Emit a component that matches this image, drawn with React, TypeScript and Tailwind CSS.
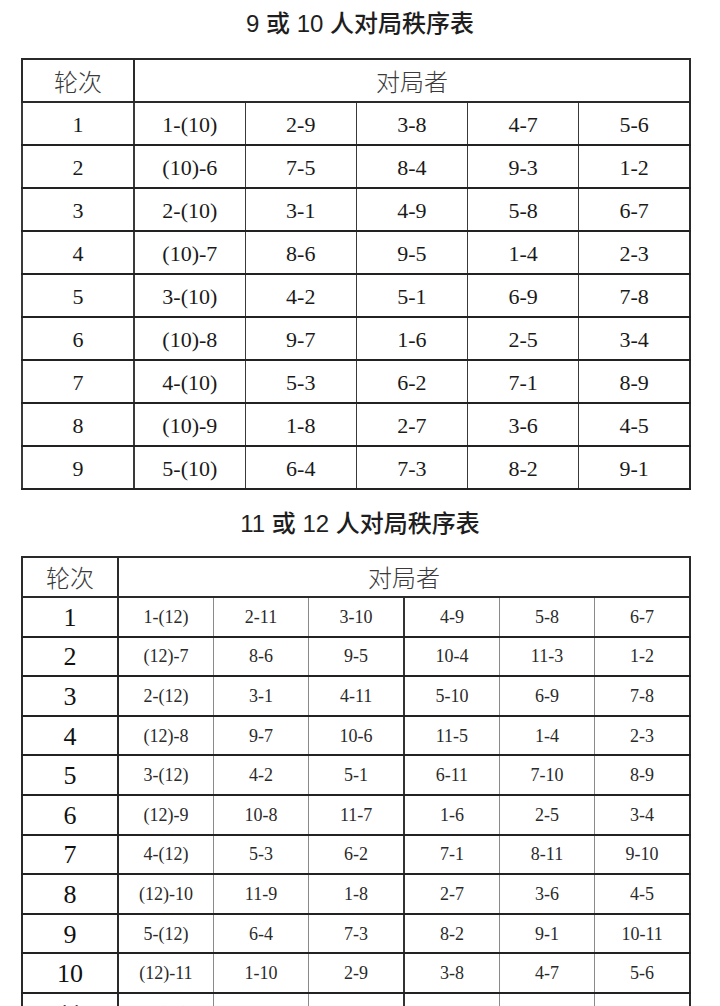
const table10: string[][] = [
  ["1-(10)", "2-9", "3-8", "4-7", "5-6"],
  ["(10)-6", "7-5", "8-4", "9-3", "1-2"],
  ["2-(10)", "3-1", "4-9", "5-8", "6-7"],
  ["(10)-7", "8-6", "9-5", "1-4", "2-3"],
  ["3-(10)", "4-2", "5-1", "6-9", "7-8"],
  ["(10)-8", "9-7", "1-6", "2-5", "3-4"],
  ["4-(10)", "5-3", "6-2", "7-1", "8-9"],
  ["(10)-9", "1-8", "2-7", "3-6", "4-5"],
  ["5-(10)", "6-4", "7-3", "8-2", "9-1"],
];

const table12: string[][] = [
  ["1-(12)", "2-11", "3-10", "4-9", "5-8", "6-7"],
  ["(12)-7", "8-6", "9-5", "10-4", "11-3", "1-2"],
  ["2-(12)", "3-1", "4-11", "5-10", "6-9", "7-8"],
  ["(12)-8", "9-7", "10-6", "11-5", "1-4", "2-3"],
  ["3-(12)", "4-2", "5-1", "6-11", "7-10", "8-9"],
  ["(12)-9", "10-8", "11-7", "1-6", "2-5", "3-4"],
  ["4-(12)", "5-3", "6-2", "7-1", "8-11", "9-10"],
  ["(12)-10", "11-9", "1-8", "2-7", "3-6", "4-5"],
  ["5-(12)", "6-4", "7-3", "8-2", "9-1", "10-11"],
  ["(12)-11", "1-10", "2-9", "3-8", "4-7", "5-6"],
  ["6-(12)", "7-5", "8-4", "9-3", "10-2", "11-1"],
];

const serif = "font-['Liberation_Serif','Noto_Sans_CJK_SC',serif]";
const cjk = "font-['Noto_Sans_CJK_SC','Liberation_Sans',sans-serif]";
const title = "font-['Liberation_Sans','Noto_Sans_CJK_SC',sans-serif]";

export default function App() {
  return (
    <div className="w-[720px] bg-white px-[21px] text-[#1a1a1a]">
      {/* 9 or 10 players */}
      <h1 className={`${title} h-[58px] pt-[12px] text-center text-[24px] leading-[24px] font-medium text-[#1e1e1e]`}>
        9 或 10 人对局秩序表
      </h1>
      <table className="w-[670px] table-fixed border-collapse">
        <thead>
          <tr className="h-[43px]">
            <th className={`${cjk} w-[112px] border-2 border-[#2a2a2a] text-[24px] leading-none font-light text-[#3a3a3a]`}>轮次</th>
            <th colSpan={5} className={`${cjk} border-2 border-[#2a2a2a] text-[24px] leading-none font-light text-[#3a3a3a]`}>
              对局者
            </th>
          </tr>
        </thead>
        <tbody>
          {table10.map((row, i) => (
            <tr key={i} className="h-[43px]">
              <td className={`${serif} border-x-2 border-y-2 border-x-[#3a3a3a] border-y-[#222] pt-[3px] text-center text-[22px] leading-none`}>
                {i + 1}
              </td>
              {row.map((c, j) => (
                <td
                  key={j}
                  className={`${serif} border-y-2 border-y-[#222] ${j === 4 ? "border-r-2 border-r-[#2a2a2a]" : "border-r border-r-[#3a3a3a]"} pt-[3px] text-center text-[22px] leading-none`}
                >
                  {c}
                </td>
              ))}
            </tr>
          ))}
        </tbody>
      </table>

      {/* 11 or 12 players */}
      <h2 className={`${title} h-[66px] pt-[22px] text-center text-[24px] leading-[24px] font-medium text-[#1e1e1e]`}>
        11 或 12 人对局秩序表
      </h2>
      <table className="w-[670px] table-fixed border-collapse">
        <thead>
          <tr className="h-[40px]">
            <th className={`${cjk} w-[96px] border-2 border-[#2a2a2a] text-[24px] leading-none font-light text-[#3a3a3a]`}>轮次</th>
            <th colSpan={6} className={`${cjk} border-2 border-[#2a2a2a] text-[24px] leading-none font-light text-[#3a3a3a]`}>
              对局者
            </th>
          </tr>
        </thead>
        <tbody>
          {table12.map((row, i) => (
            <tr key={i} className="h-[39.6px]">
              <td className={`${serif} border-x-2 border-y-2 border-x-[#2a2a2a] border-y-[#222] pt-[2px] text-center text-[26px] leading-none text-[#111]`}>
                {i + 1}
              </td>
              {row.map((c, j) => (
                <td
                  key={j}
                  className={`${serif} border-y-2 border-y-[#222] ${
                    j === 5
                      ? "border-r-2 border-r-[#2a2a2a]"
                      : j === 2
                      ? "border-r-2 border-r-[#333]"
                      : "border-r border-r-[#8a8a8a]"
                  } text-center text-[18px] leading-none text-[#2a2a2a]`}
                >
                  {c}
                </td>
              ))}
            </tr>
          ))}
        </tbody>
      </table>
    </div>
  );
}
